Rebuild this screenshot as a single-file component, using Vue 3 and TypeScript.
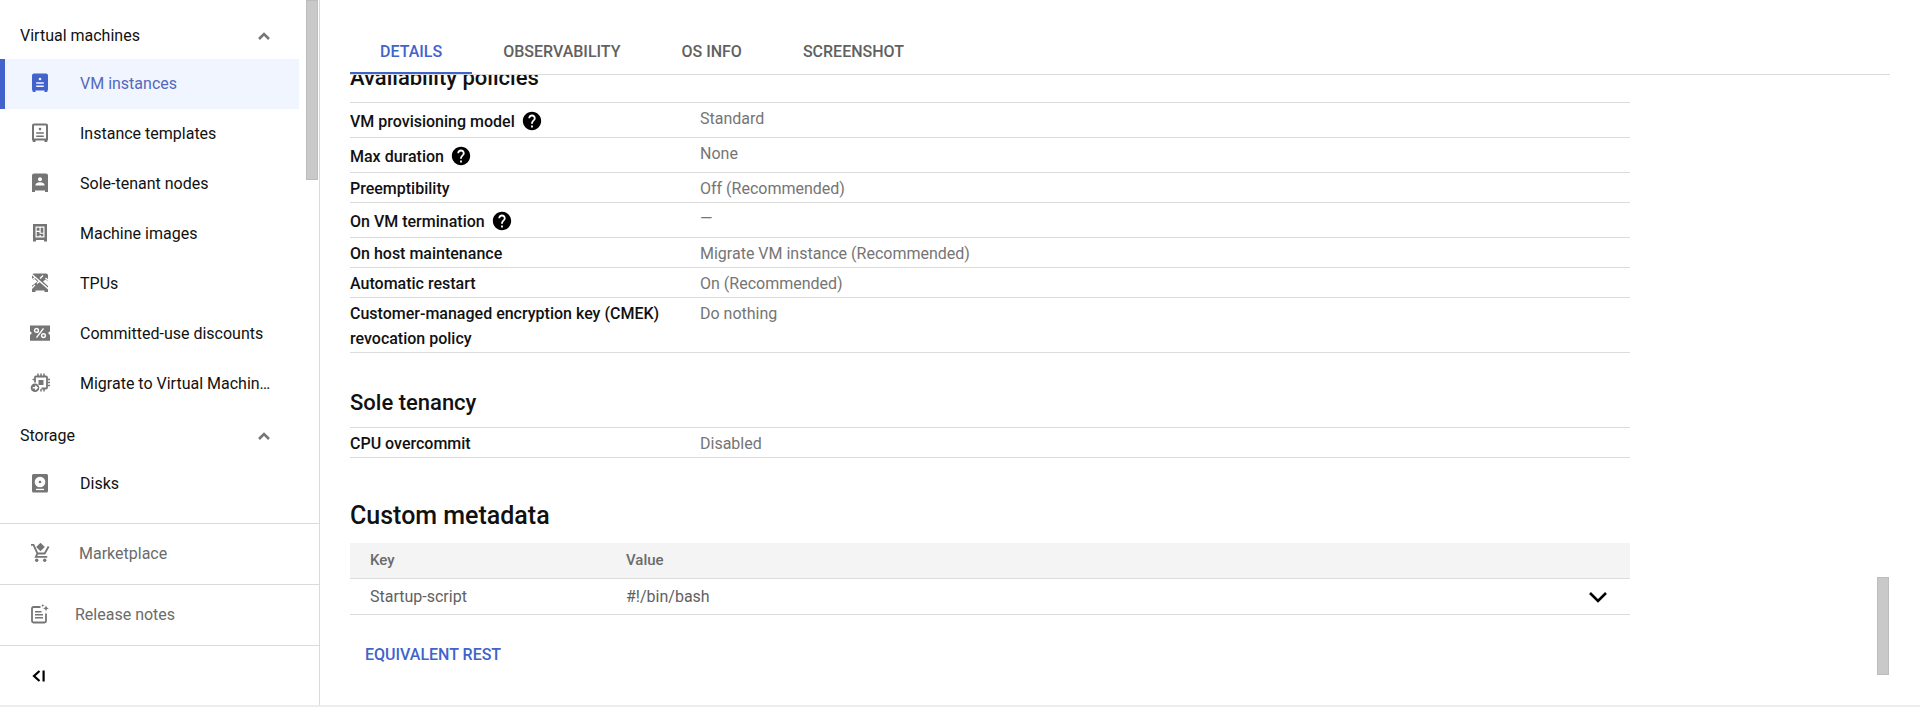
<script setup lang="ts">
import { ref } from 'vue'

type IconName =
  | 'vm' | 'template' | 'tenant' | 'image' | 'tpu' | 'discount' | 'migrate' | 'disk'

interface NavItem { label: string; icon: IconName }
interface NavGroup { title: string; items: NavItem[] }
interface Policy { label: string; value: string; help?: boolean }

const groups: NavGroup[] = [
  {
    title: 'Virtual machines',
    items: [
      { label: 'VM instances', icon: 'vm' },
      { label: 'Instance templates', icon: 'template' },
      { label: 'Sole-tenant nodes', icon: 'tenant' },
      { label: 'Machine images', icon: 'image' },
      { label: 'TPUs', icon: 'tpu' },
      { label: 'Committed-use discounts', icon: 'discount' },
      { label: 'Migrate to Virtual Machines', icon: 'migrate' },
    ],
  },
  { title: 'Storage', items: [{ label: 'Disks', icon: 'disk' }] },
]
const activeItem = ref('VM instances')

const tabs = ['DETAILS', 'OBSERVABILITY', 'OS INFO', 'SCREENSHOT']
const activeTab = ref('DETAILS')

const policies: Policy[] = [
  { label: 'VM provisioning model', value: 'Standard', help: true },
  { label: 'Max duration', value: 'None', help: true },
  { label: 'Preemptibility', value: 'Off (Recommended)' },
  { label: 'On VM termination', value: '—', help: true },
  { label: 'On host maintenance', value: 'Migrate VM instance (Recommended)' },
  { label: 'Automatic restart', value: 'On (Recommended)' },
  { label: 'Customer-managed encryption key (CMEK) revocation policy', value: 'Do nothing' },
]
</script>

<template>
  <div class="app">
    <aside class="sidebar">
      <nav class="nav">
        <section v-for="group in groups" :key="group.title">
          <button class="group" type="button">
            <span>{{ group.title }}</span>
            <svg class="chevron" viewBox="0 0 14 14"><path d="M2 10l5-5 5 5" /></svg>
          </button>
          <a
            v-for="item in group.items"
            :key="item.label"
            href="#"
            class="item"
            :class="{ active: item.label === activeItem }"
            @click.prevent="activeItem = item.label"
          >
            <svg class="icon" viewBox="0 0 24 24">
              <template v-if="item.icon === 'vm'">
                <path d="M6 2.500h12a2 2 0 0 1 2 2v14.500l-.7.8V21h-2.800v-1.500h-9V21H4.700v-1.200L4 19V4.500a2 2 0 0 1 2-2z" />
                <circle class="cut" cx="12" cy="8" r="1.300" />
                <path class="cut" d="M8.200 11.300h7.600v1.400H8.200zM8.200 14.500h7.600v1.400H8.200z" />
              </template>
              <template v-else-if="item.icon === 'template'">
                <path fill-rule="evenodd" d="M6 2.500h12a2 2 0 0 1 2 2v14.500l-.7.8V21h-2.800v-1.500h-9V21H4.700v-1.200L4 19V4.500a2 2 0 0 1 2-2zM6 4.500v13h12v-13z" />
                <circle cx="12" cy="8" r="1.300" />
                <path d="M8.200 11.300h7.600v1.400H8.200zM8.200 14.500h7.600v1.400H8.200z" />
              </template>
              <template v-else-if="item.icon === 'tenant'">
                <path d="M6 2.500h12a2 2 0 0 1 2 2V21h-3v-1.500H7V21H4V4.500a2 2 0 0 1 2-2z" />
                <circle class="cut" cx="12" cy="8.300" r="2" />
                <path class="cut" d="M7.500 14.500v-.8c0-1.500 2.500-2.400 4.500-2.400s4.500.9 4.500 2.400v.8z" />
              </template>
              <template v-else-if="item.icon === 'image'">
                <path d="M5 3h14v17.500h-3V19H8v1.500H5z" />
                <path class="cut" d="M7.500 5.500h9v11h-9z" />
                <path d="M8.700 6.700h2.800v3H8.700zM12.700 6.700h2.600v5h-2.600zM8.700 10.900h2.800v1.800h3.800v2.600h-2.600v-1.200h-1.200v1.200H8.700z" />
              </template>
              <template v-else-if="item.icon === 'tpu'">
                <path d="M6 2.500h12a2 2 0 0 1 2 2V21h-3.500v-1.500h-9V21H4V4.500a2 2 0 0 1 2-2z" />
                <path class="cut-line" d="M4 3.500l16.500 14.500M3.500 9l3.500-2.500M3.500 17.500l3.500-3.500M12 7.500l3-3M17.500 7l3 2.500M9 12.500l2.200-2" />
                <path class="cut" d="M3.500 9.500L6.500 8l3 2.500-6 4.500zM20.500 10.500l-3-2-2.500 2 5.500 5z" />
              </template>
              <template v-else-if="item.icon === 'discount'">
                <path d="M2 4.500h20v6a1.600 1.600 0 0 0 0 3.200v6H2v-6a1.600 1.600 0 0 0 0-3.200z" />
                <circle class="ring" cx="8.500" cy="9.400" r="1.900" />
                <circle class="ring" cx="15.500" cy="14.600" r="1.900" />
                <path class="ring" d="M15.500 7.300l-7 9.400" />
              </template>
              <template v-else-if="item.icon === 'migrate'">
                <path class="stroke" d="M7 11.500V6.500a1 1 0 0 1 1-1h10a1 1 0 0 1 1 1v10a1 1 0 0 1-1 1h-4.500" />
                <path class="stroke thin" d="M10 5V2.500M13 5V2.500M16 5V2.500M19.500 8.500H22M19.500 11.500H22M19.500 14.500H22M16 18v2.500M13 18v2.500M7 8.500H4.500" />
                <path d="M10.500 9h5v5h-5z" />
                <circle cx="7" cy="16.800" r="4.300" />
                <path class="ring" d="M4.700 16.800h4.200M7.200 14.800l2 2-2 2" />
              </template>
              <template v-else>
                <path d="M5.500 3h13A1.500 1.500 0 0 1 20 4.500V20a1.500 1.500 0 0 1-1.500 1.500h-13A1.500 1.500 0 0 1 4 20V4.500A1.500 1.500 0 0 1 5.500 3z" />
                <circle class="cut" cx="12" cy="11" r="5.300" />
                <circle cx="12" cy="11" r="1.300" />
                <path class="cut" d="M8 17.800h8v1.300H8z" />
              </template>
            </svg>
            <span class="label">{{ item.label }}</span>
          </a>
        </section>
        <div class="thumb nav-thumb"></div>
      </nav>
      <a href="#" class="foot">
        <svg class="icon" viewBox="0 0 24 24">
          <path d="M12.500 1.800l4.300 4.200-4.300 4.200-4.300-4.200z" />
          <path class="stroke" d="M3 3.900h2.500l4 8.600h7.200l3.900-7M9.500 12.500l-1.700 3.300h11.400" />
          <circle cx="8.700" cy="19.300" r="1.700" />
          <circle cx="16.700" cy="19.300" r="1.700" />
        </svg>
        <span class="label">Marketplace</span>
      </a>
      <a href="#" class="foot notes">
        <svg class="icon" viewBox="0 0 24 24">
          <path class="stroke" d="M12.500 5H5.500A1.500 1.500 0 0 0 4 6.500V19a1.500 1.500 0 0 0 1.500 1.500h11A1.500 1.500 0 0 0 18 19v-7.500" />
          <path class="stroke thin" d="M7 9.700h6.500M7 12.700h8M7 15.700h8" />
          <path d="M18 3.500l.8 2 2 .8-2 .9-.8 2-.9-2-2-.9 2-.8zM14.800 2l.5 1.100 1.100.5-1.100.5-.5 1.100-.5-1.100-1.100-.5 1.100-.5z" />
        </svg>
        <span class="label">Release notes</span>
      </a>
      <button type="button" class="foot collapse" aria-label="Collapse navigation">
        <svg class="icon" viewBox="0 0 24 24"><path d="M11.500 7L6 12l5.500 5M15.600 6.500v11" /></svg>
      </button>
    </aside>

    <main class="main">
      <div class="tabs" role="tablist">
        <button
          v-for="tab in tabs"
          :key="tab"
          type="button"
          role="tab"
          class="tab"
          :class="{ active: tab === activeTab }"
          :aria-selected="tab === activeTab"
          @click="activeTab = tab"
        >{{ tab }}</button>
      </div>
      <div class="viewport">
        <div class="content">
          <h3>Availability policies</h3>
          <table class="props">
            <tbody>
              <tr v-for="row in policies" :key="row.label">
                <th scope="row">
                  <span v-if="row.help" class="with-help">
                    {{ row.label }}
                    <svg class="help" viewBox="0 0 24 24">
                      <path d="M12 2C6.480 2 2 6.480 2 12s4.480 10 10 10 10-4.480 10-10S17.520 2 12 2zm1 17h-2v-2h2v2zm2.070-7.750l-.9.920C13.450 12.900 13 13.500 13 15h-2v-.5c0-1.100.45-2.100 1.170-2.830l1.240-1.260c.37-.36.59-.86.59-1.410 0-1.100-.9-2-2-2s-2 .9-2 2H8c0-2.210 1.790-4 4-4s4 1.790 4 4c0 .88-.36 1.680-.93 2.250z" />
                    </svg>
                  </span>
                  <template v-else>{{ row.label }}</template>
                </th>
                <td>{{ row.value }}</td>
              </tr>
            </tbody>
          </table>

          <h3>Sole tenancy</h3>
          <table class="props">
            <tbody>
              <tr><th scope="row">CPU overcommit</th><td>Disabled</td></tr>
            </tbody>
          </table>

          <h2>Custom metadata</h2>
          <table class="meta">
            <thead>
              <tr><th class="key">Key</th><th>Value</th><th class="action"></th></tr>
            </thead>
            <tbody>
              <tr>
                <td>Startup-script</td>
                <td>#!/bin/bash</td>
                <td class="action">
                  <button type="button" class="expand" aria-label="Expand">
                    <svg viewBox="0 0 24 24"><path d="M4 8l8 8 8-8" /></svg>
                  </button>
                </td>
              </tr>
            </tbody>
          </table>
          <button type="button" class="rest">EQUIVALENT REST</button>
        </div>
        <div class="thumb main-thumb"></div>
      </div>
    </main>
  </div>
</template>

<style>
body {
  margin: 0;
  background: #fff;
}
</style>

<style scoped>
.app {
  display: flex;
  box-sizing: border-box;
  height: 100vh;
  min-height: 700px;
  border-bottom: 2px solid #ececec;
  font-family: Roboto, "Liberation Sans", sans-serif;
  font-size: 16px;
  line-height: 25px;
  color: #111;
}
button {
  padding: 0;
  border: 0;
  background: none;
  font: inherit;
  color: inherit;
  cursor: pointer;
}
a {
  color: inherit;
  text-decoration: none;
}
.sidebar {
  display: flex;
  flex: none;
  flex-direction: column;
  box-sizing: border-box;
  width: 320px;
  border-right: 1px solid #dadada;
}
.nav {
  position: relative;
  flex: 1;
  min-height: 0;
  overflow: hidden;
  padding: 9px 20px 0 0;
}
.thumb {
  position: absolute;
  box-sizing: border-box;
  width: 12px;
  border: 1px solid #bdbdbd;
  background: #c9c9c9;
}
.nav-thumb {
  top: 0;
  right: 1px;
  height: 180px;
}
.group {
  display: flex;
  align-items: center;
  justify-content: space-between;
  box-sizing: border-box;
  width: 100%;
  height: 50px;
  padding: 3px 28px 0 20px;
}
.chevron {
  width: 14px;
  height: 14px;
  fill: none;
  stroke: #757575;
  stroke-width: 2.500;
}
.item {
  --bg: #fff;
  display: flex;
  align-items: center;
  box-sizing: border-box;
  height: 50px;
  padding: 0 24px 2px 28px;
}
.item.active {
  --bg: #f0f5ff;
  padding-left: 23px;
  border-left: 5px solid #4263cc;
  background: var(--bg);
  color: #5468bd;
}
.icon {
  flex: none;
  width: 24px;
  height: 24px;
  fill: #757575;
}
.item.active .icon {
  fill: #4263cc;
}
.icon .cut {
  fill: var(--bg);
}
.icon .cut-line {
  fill: none;
  stroke: var(--bg);
  stroke-width: 1.400;
}
.icon .ring {
  fill: none;
  stroke: var(--bg);
  stroke-width: 1.400;
}
.icon .stroke {
  fill: none;
  stroke: #757575;
  stroke-width: 1.800;
}
.icon .stroke.thin {
  stroke-width: 1.500;
}
.label {
  margin-left: 28px;
  overflow: hidden;
  text-overflow: ellipsis;
  white-space: nowrap;
}
.foot {
  display: flex;
  flex: none;
  align-items: center;
  box-sizing: border-box;
  height: 61px;
  padding: 0 28px 2px;
  border-top: 1px solid #dadada;
  color: #6b6b6b;
}
.foot .label {
  margin-left: 27px;
}
.foot.notes .label {
  margin-left: 23px;
}
.foot.collapse {
  height: 60px;
  padding-bottom: 0;
}
.foot.collapse .icon {
  fill: none;
  stroke: #000;
  stroke-width: 2.200;
}
.main {
  display: flex;
  flex: 1;
  flex-direction: column;
  min-width: 0;
}
.tabs {
  display: flex;
  flex: none;
  gap: 1px;
  margin: 30px 30px 0;
  border-bottom: 1px solid #dcdcdc;
}
.tab {
  height: 44px;
  padding: 0 30px;
  border-bottom: 2px solid transparent;
  font-weight: 500;
  color: #616161;
}
.tab.active {
  border-color: #4263cc;
  color: #4263cc;
}
.viewport {
  position: relative;
  flex: 1;
  min-height: 0;
  margin: 0 30px;
  overflow: hidden;
}
.main-thumb {
  right: 1px;
  bottom: 30px;
  height: 98px;
}
.content {
  max-width: 1280px;
  margin-top: -12px;
}
h2,
h3 {
  margin: 0;
  line-height: 30px;
  font-weight: 500;
}
h3 {
  padding-bottom: 9px;
  font-size: 22px;
}
h2 {
  padding: 43px 0 12px;
  font-size: 25px;
}
.props + h3 {
  padding-top: 35px;
}
table {
  width: 100%;
  border-collapse: separate;
  border-spacing: 0;
  table-layout: fixed;
}
th,
td {
  text-align: left;
}
.props {
  border-top: 1px solid #dcdcdc;
}
.props th,
.props td {
  padding: 3px 0 1px;
  border-bottom: 1px solid #dcdcdc;
  vertical-align: top;
}
.props th {
  width: 320px;
  padding-right: 30px;
  font-weight: 500;
}
.props td {
  color: #757575;
}
.with-help {
  display: flex;
  gap: 6px;
  align-items: center;
  height: 30px;
}
.help {
  width: 22px;
  height: 22px;
  fill: #000;
}
.meta th,
.meta td {
  height: 35px;
  padding: 0 0 0 20px;
  border-bottom: 1px solid #dcdcdc;
}
.meta th {
  background: #f4f4f4;
  font-size: 15px;
  font-weight: 500;
  color: #6b6b6b;
}
.meta td {
  color: #616161;
}
.meta .key {
  width: 236px;
}
.meta .action {
  width: 24px;
  padding-right: 20px;
}
.expand {
  display: block;
  width: 24px;
  height: 24px;
}
.expand svg {
  display: block;
  fill: none;
  stroke: #000;
  stroke-width: 2.600;
}
.rest {
  margin-top: 27px;
  padding: 0 15px;
  font-weight: 500;
  color: #4263cc;
}
</style>
